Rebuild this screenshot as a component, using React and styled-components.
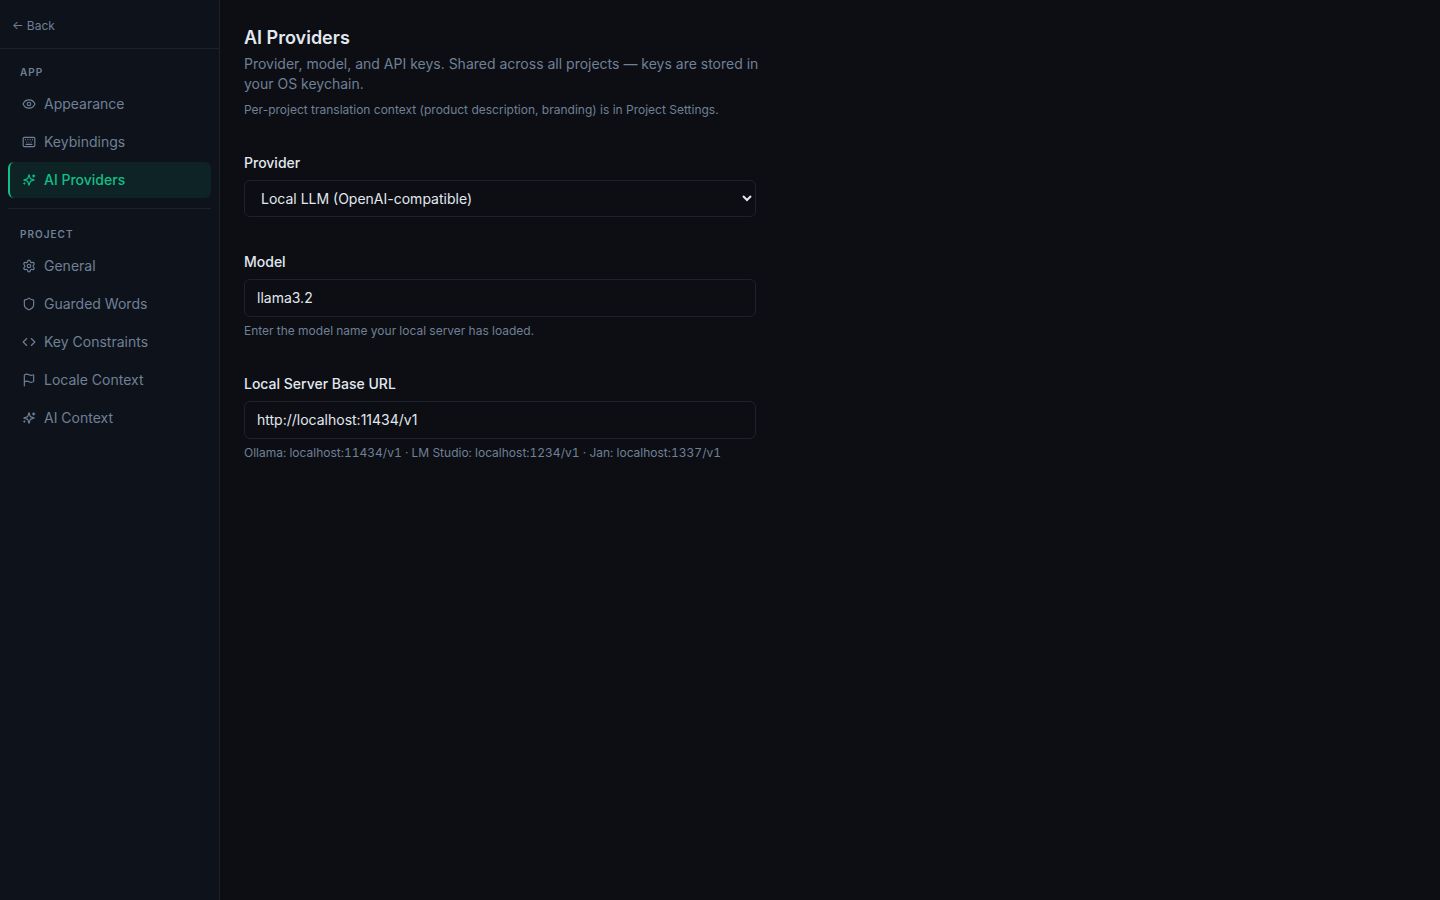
import React from 'react';
import styled, { createGlobalStyle } from 'styled-components';
import { Eye, Keyboard, Settings, Shield, Code, Flag } from 'lucide-react';

const GlobalStyle = createGlobalStyle`
  *, *::before, *::after { box-sizing: border-box; }
  body {
    margin: 0;
    background: #0c0e13;
    color: #e2e8f0;
    font-family: Inter, "Liberation Sans", sans-serif;
    font-size: 14px;
    line-height: 20px;
    color-scheme: dark;
  }
`;

const muted = '#6f8097';
const line = '#1e222b';
const accent = '#11bf88';

const Layout = styled.div`
  display: flex;
  min-height: 100vh;
`;

const Sidebar = styled.aside`
  flex: 0 0 220px;
  background: #0e121a;
  border-right: 1px solid ${line};
`;

const SidebarHeader = styled.div`
  padding: 18px 12px 14px;
  border-bottom: 1px solid ${line};
`;

const BackButton = styled.button`
  display: block;
  padding: 0;
  border: 0;
  background: none;
  color: ${muted};
  font: inherit;
  font-size: 12px;
  line-height: 16px;
  cursor: pointer;
`;

const Nav = styled.nav`
  padding: 8px;
`;

const Group = styled.section`
  & + & {
    margin-top: 10px;
    border-top: 1px solid ${line};
    padding-top: 10px;
  }
`;

const GroupTitle = styled.h2`
  margin: 0;
  padding: 8px 12px 6px;
  color: ${muted};
  font-size: 10px;
  font-weight: 600;
  line-height: 15px;
  letter-spacing: 1px;
  text-transform: uppercase;
`;

const NavList = styled.ul`
  display: flex;
  flex-direction: column;
  gap: 2px;
  margin: 0;
  padding: 0;
  list-style: none;
`;

const NavLink = styled.a`
  display: flex;
  align-items: center;
  gap: 8px;
  padding: 8px 12px;
  border-left: 2px solid ${({ $active }) => ($active ? accent : 'transparent')};
  border-radius: 6px;
  background: ${({ $active }) => ($active ? '#0e2325' : 'transparent')};
  color: ${({ $active }) => ($active ? accent : muted)};
  font-weight: ${({ $active }) => ($active ? 500 : 400)};
  text-decoration: none;
`;

const Main = styled.main`
  flex: 1;
  min-width: 0;
  padding: 24px;
`;

const Content = styled.div`
  display: flex;
  flex-direction: column;
  gap: 35px;
`;

const Intro = styled.header`
  max-width: 520px;
`;

const Title = styled.h1`
  margin: 0 0 2px;
  font-size: 18px;
  font-weight: 600;
  line-height: 28px;
`;

const Lead = styled.p`
  margin: 0 0 8px;
  color: ${muted};
`;

const Note = styled.p`
  margin: 0;
  color: ${muted};
  font-size: 12px;
  line-height: 16px;
`;

const Hint = styled(Note)`
  font-variant-numeric: tabular-nums;
`;

const Field = styled.div`
  display: flex;
  flex-direction: column;
  max-width: 512px;
`;

const Label = styled.label`
  margin-bottom: 7px;
  font-weight: 500;
`;

const controlStyles = `
  width: 100%;
  border: 1px solid ${line};
  border-radius: 6px;
  background: #0c0e13;
  color: #e2e8f0;
  font: inherit;
`;

const Select = styled.select`
  ${controlStyles}
  height: 37px;
  padding: 8px 0 8px 12px;
`;

const Input = styled.input`
  ${controlStyles}
  height: 38px;
  margin-bottom: 6px;
  padding: 7px 12px 9px;
`;

function Sparkles({ size, ...rest }) {
  return (
    <svg
      width={size}
      height={size}
      viewBox="0 0 24 24"
      fill="none"
      stroke="currentColor"
      strokeWidth="2"
      strokeLinecap="round"
      strokeLinejoin="round"
      {...rest}
    >
      <path d="m12 3-1.912 5.813a2 2 0 0 1-1.275 1.275L3 12l5.813 1.912a2 2 0 0 1 1.275 1.275L12 21l1.912-5.813a2 2 0 0 1 1.275-1.275L21 12l-5.813-1.912a2 2 0 0 1-1.275-1.275L12 3Z" />
      <path d="M20 3v4M22 5h-4M4 17v2M5 18H3" />
    </svg>
  );
}

const groups = [
  {
    title: 'App',
    items: [
      { label: 'Appearance', icon: Eye },
      { label: 'Keybindings', icon: Keyboard },
      { label: 'AI Providers', icon: Sparkles, active: true },
    ],
  },
  {
    title: 'Project',
    items: [
      { label: 'General', icon: Settings },
      { label: 'Guarded Words', icon: Shield },
      { label: 'Key Constraints', icon: Code },
      { label: 'Locale Context', icon: Flag },
      { label: 'AI Context', icon: Sparkles },
    ],
  },
];

export default function App() {
  return (
    <>
      <GlobalStyle />
      <Layout>
        <Sidebar>
          <SidebarHeader>
            <BackButton type="button">← Back</BackButton>
          </SidebarHeader>
          <Nav aria-label="Settings">
            {groups.map(({ title, items }) => (
              <Group key={title}>
                <GroupTitle>{title}</GroupTitle>
                <NavList>
                  {items.map(({ label, icon: Icon, active }) => (
                    <li key={label}>
                      <NavLink href="#" $active={active} aria-current={active ? 'page' : undefined}>
                        <Icon size={14} aria-hidden="true" />
                        {label}
                      </NavLink>
                    </li>
                  ))}
                </NavList>
              </Group>
            ))}
          </Nav>
        </Sidebar>
        <Main>
          <Content>
            <Intro>
              <Title>AI Providers</Title>
              <Lead>
                Provider, model, and API keys. Shared across all projects — keys are stored in your OS keychain.
              </Lead>
              <Note>Per-project translation context (product description, branding) is in Project Settings.</Note>
            </Intro>
            <Field>
              <Label htmlFor="provider">Provider</Label>
              <Select id="provider" defaultValue="local">
                <option value="local">Local LLM (OpenAI-compatible)</option>
              </Select>
            </Field>
            <Field>
              <Label htmlFor="model">Model</Label>
              <Input id="model" type="text" defaultValue="llama3.2" />
              <Hint>Enter the model name your local server has loaded.</Hint>
            </Field>
            <Field>
              <Label htmlFor="base-url">Local Server Base URL</Label>
              <Input id="base-url" type="text" defaultValue="http://localhost:11434/v1" />
              <Hint>Ollama: localhost:11434/v1 · LM Studio: localhost:1234/v1 · Jan: localhost:1337/v1</Hint>
            </Field>
          </Content>
        </Main>
      </Layout>
    </>
  );
}
